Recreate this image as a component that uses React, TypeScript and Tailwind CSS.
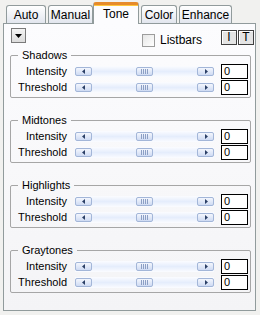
import React from 'react';

const tabs = [
  { name: 'Auto', w: 'w-[40px]', ml: 'ml-0' },
  { name: 'Manual', w: 'w-[45px]', ml: 'ml-[2px]' },
  { name: 'Tone', w: 'w-[46px]', ml: 'ml-0', active: true },
  { name: 'Color', w: 'w-[36px]', ml: 'ml-[2px]' },
  { name: 'Enhance', w: 'w-[53px]', ml: 'ml-[2px]' },
];

const groups = ['Shadows', 'Midtones', 'Highlights', 'Graytones'];

const Arrow: React.FC<{ dir: 'left' | 'right' }> = ({ dir }) => (
  <svg width="4" height="5" viewBox="0 0 4 5">
    {dir === 'left' ? (
      <polygon points="3,0 3,5 0,2.5" fill="#2b3f66" />
    ) : (
      <polygon points="1,0 1,5 4,2.5" fill="#2b3f66" />
    )}
  </svg>
);

const ScrollButton: React.FC<{ children?: React.ReactNode }> = ({ children }) => (
  <div className="w-[17px] h-[9px] flex items-center justify-center rounded-[2px] border border-[#a3b6d8] bg-gradient-to-b from-[#f3f6fd] to-[#cfdbf3]">
    {children}
  </div>
);

const ScrollBar: React.FC = () => (
  <div className="w-[139px] h-[11px] flex items-center justify-between bg-gradient-to-b from-[#fbfcff] via-[#e5edfc] to-[#fbfcff]">
    <ScrollButton>
      <Arrow dir="left" />
    </ScrollButton>
    <ScrollButton>
      <div className="flex gap-[1px]">
        <div className="w-[1px] h-[5px] bg-[#8c9fc4]" />
        <div className="w-[1px] h-[5px] bg-[#8c9fc4]" />
        <div className="w-[1px] h-[5px] bg-[#8c9fc4]" />
        <div className="w-[1px] h-[5px] bg-[#8c9fc4]" />
      </div>
    </ScrollButton>
    <ScrollButton>
      <Arrow dir="right" />
    </ScrollButton>
  </div>
);

const Row: React.FC<{ label: string }> = ({ label }) => (
  <div className="flex items-center h-[16px]">
    <span className="w-[56px] text-right">{label}</span>
    <div className="ml-[8px]">
      <ScrollBar />
    </div>
    <div className="ml-[7px] w-[27px] h-[15px] border border-black bg-white pl-[2px] leading-[13px]">0</div>
  </div>
);

const Group: React.FC<{ title: string }> = ({ title }) => (
  <fieldset className="ml-[6px] w-[241px] min-w-0 border border-[#a6a6a6] rounded-[2px] pt-[1px] pb-[2px]">
    <legend className="ml-[7px] px-[4px] h-[14px] leading-[14px]">{title}</legend>
    <Row label="Intensity" />
    <Row label="Threshold" />
  </fieldset>
);

const App: React.FC = () => {
  return (
    <div className="w-[260px] h-[315px] bg-[#f1f1ef] text-[11px] text-black font-['Tahoma','Liberation_Sans',sans-serif] overflow-hidden">
      {/* tab strip */}
      <div className="flex items-end h-[24px] pl-[6px]">
        {tabs.map((tab) =>
          tab.active ? (
            <div
              key={tab.name}
              className={`${tab.ml} ${tab.w} relative z-10 h-[22px] flex items-center justify-center bg-[#fcfcfe] border-x border-[#919b9c] border-t-[3px] border-t-[#e68b2c] rounded-t-[3px] shadow-[inset_0_1px_0_#ffc73c] pb-[1px] text-[12px]`}
            >
              {tab.name}
            </div>
          ) : (
            <div
              key={tab.name}
              className={`${tab.ml} ${tab.w} mb-[1px] h-[18px] flex items-center justify-center border-x border-t border-[#919b9c] rounded-t-[3px] bg-gradient-to-b from-white to-[#e2e6ee] text-[12px]`}
            >
              {tab.name}
            </div>
          )
        )}
      </div>

      {/* tab page */}
      <div className="-mt-[1px] ml-[3px] w-[253px] h-[288px] border border-[#919b9c] bg-gradient-to-b from-[#fcfcfe] to-[#f4f4f6]">
        <div className="flex items-start pt-[4px] pl-[7px] h-[23px]">
          <div className="w-[15px] h-[15px] flex items-center justify-center border border-[#7a7a7a] bg-gradient-to-b from-[#f4f4f4] to-[#dcdcdc]">
            <svg width="7" height="4" viewBox="0 0 7 4">
              <polygon points="0,0 7,0 3.5,4" fill="#000" />
            </svg>
          </div>
          <div className="ml-[116px] mt-[6px] flex items-center">
            <div className="w-[13px] h-[13px] border border-[#9c9c9c] bg-gradient-to-br from-[#e6e6e6] to-white" />
            <span className="ml-[5px] text-[12px] leading-[13px]">Listbars</span>
          </div>
          <div className="ml-[19px] mt-[2px] flex gap-[1px]">
            <div className="w-[16px] h-[15px] flex items-center justify-center border border-[#404040] bg-[#e4e4e4] shadow-[inset_1px_1px_0_#ffffff] text-[12px] leading-[13px]">
              I
            </div>
            <div className="w-[16px] h-[15px] flex items-center justify-center border border-[#404040] bg-[#e4e4e4] shadow-[inset_1px_1px_0_#ffffff] text-[12px] leading-[13px]">
              T
            </div>
          </div>
        </div>

        <div className="flex flex-col gap-[15px] mt-[1px]">
          {groups.map((g) => (
            <Group key={g} title={g} />
          ))}
        </div>
      </div>
    </div>
  );
};

export default App;
